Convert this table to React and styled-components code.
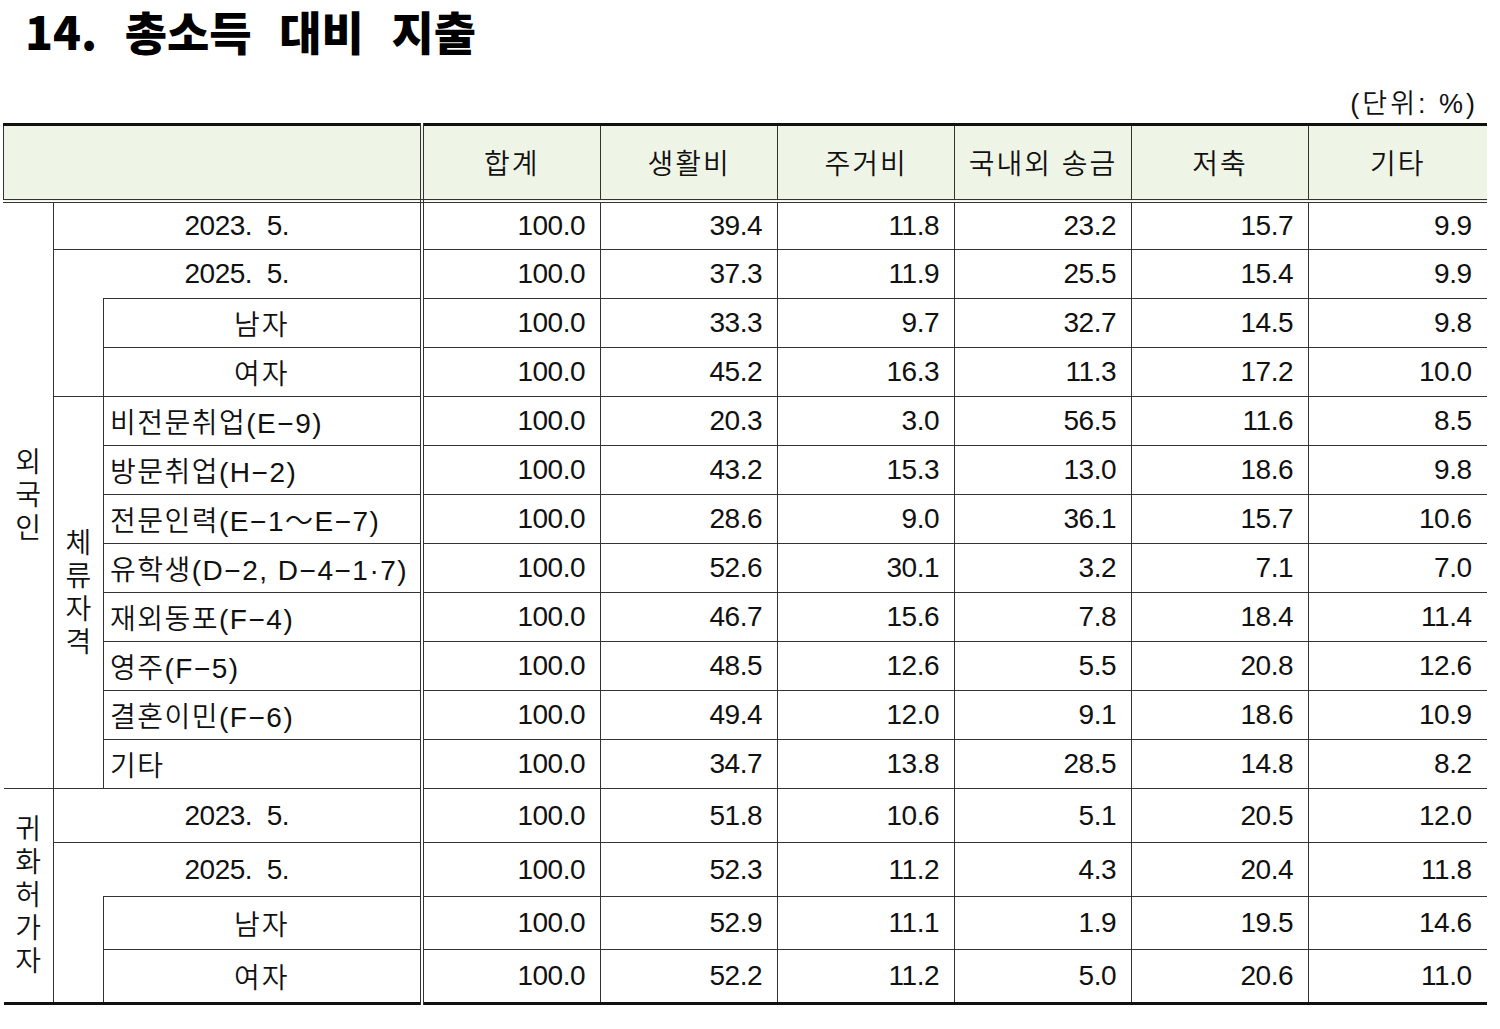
import React from 'react';
import styled, { createGlobalStyle } from 'styled-components';

const GlobalStyle = createGlobalStyle`
  body {
    margin: 0;
    background: #fff;
    color: #111;
    font-family: "Liberation Sans", "Noto Sans CJK KR", sans-serif;
  }
`;

const Page = styled.div`
  width: 1483px;
  margin-left: 3px;
`;

const Title = styled.h1`
  margin: 0;
  height: 60px;
  padding-left: 22px;
  font-family: "Noto Sans CJK KR", sans-serif;
  font-weight: 900;
  font-size: 46px;
  line-height: 60px;
  letter-spacing: 0;
  word-spacing: 17px;
  color: #000;
`;

const Unit = styled.div`
  box-sizing: border-box;
  height: 63px;
  display: flex;
  justify-content: flex-end;
  align-items: flex-end;
  padding: 0 8px 3px 0;
  font-size: 27px;
  font-weight: 350;
  line-height: 32px;
  letter-spacing: 3px;
`;

const Table = styled.table`
  width: 1483px;
  table-layout: fixed;
  border-collapse: collapse;
  border-top: 3px solid #111;
  border-bottom: 3px solid #111;
  font-size: 28px;
  font-weight: 350;
`;

const Row = styled.tr`
  height: ${p => p.$h}px;
`;

const HeadCell = styled.th`
  padding: 0;
  background: #eef4e6;
  font-weight: 350;
  text-align: center;
  letter-spacing: 2px;
  border-bottom: 4px double #333;
  border-left: 1px solid #333;
  border-right: ${p => (p.$double ? '4px double #333' : 'none')};
`;

const GroupCell = styled.td`
  padding: 0;
  vertical-align: middle;
  border-right: 1px solid #333;
  border-bottom: ${p => (p.$closed ? '1px solid #333' : 'none')};
`;

const Stack = styled.span`
  display: flex;
  flex-direction: column;
  align-items: center;
  line-height: 33px;
`;

const BlankCell = styled.td`
  padding: 0;
  border-top: hidden;
  border-right: 1px solid #333;
  border-bottom: 1px solid #333;
`;

const LabelCell = styled.td`
  padding: 0 0 0 ${p => (p.$left ? '6px' : '0')};
  text-align: ${p => (p.$left ? 'left' : 'center')};
  letter-spacing: ${p => (p.$left ? '1.5px' : p.$tight ? '-0.5px' : '2px')};
  white-space: pre;
  border-right: 4px double #333;
  border-bottom: 1px solid #333;
`;

const NumCell = styled.td`
  padding: 0 15px 0 0;
  text-align: right;
  letter-spacing: -0.5px;
  border-left: 1px solid #333;
  border-bottom: 1px solid #333;
`;

const heads = ['합계', '생활비', '주거비', '국내외 송금', '저축', '기타'];

const foreign = {
  heights: [49, 49, 49, 49, 49, 49, 49, 49, 49, 49, 49, 49],
  years: [
    ['2023.  5.', ['100.0', '39.4', '11.8', '23.2', '15.7', '9.9']],
    ['2025.  5.', ['100.0', '37.3', '11.9', '25.5', '15.4', '9.9']],
  ],
  sex: [
    ['남자', ['100.0', '33.3', '9.7', '32.7', '14.5', '9.8']],
    ['여자', ['100.0', '45.2', '16.3', '11.3', '17.2', '10.0']],
  ],
  status: [
    ['비전문취업(E−9)', ['100.0', '20.3', '3.0', '56.5', '11.6', '8.5']],
    ['방문취업(H−2)', ['100.0', '43.2', '15.3', '13.0', '18.6', '9.8']],
    ['전문인력(E−1～E−7)', ['100.0', '28.6', '9.0', '36.1', '15.7', '10.6']],
    ['유학생(D−2, D−4−1·7)', ['100.0', '52.6', '30.1', '3.2', '7.1', '7.0']],
    ['재외동포(F−4)', ['100.0', '46.7', '15.6', '7.8', '18.4', '11.4']],
    ['영주(F−5)', ['100.0', '48.5', '12.6', '5.5', '20.8', '12.6']],
    ['결혼이민(F−6)', ['100.0', '49.4', '12.0', '9.1', '18.6', '10.9']],
    ['기타', ['100.0', '34.7', '13.8', '28.5', '14.8', '8.2']],
  ],
};

const naturalized = {
  heights: [54, 54, 53, 54],
  years: [
    ['2023.  5.', ['100.0', '51.8', '10.6', '5.1', '20.5', '12.0']],
    ['2025.  5.', ['100.0', '52.3', '11.2', '4.3', '20.4', '11.8']],
  ],
  sex: [
    ['남자', ['100.0', '52.9', '11.1', '1.9', '19.5', '14.6']],
    ['여자', ['100.0', '52.2', '11.2', '5.0', '20.6', '11.0']],
  ],
  status: [],
};

const Nums = ({ values }) => values.map((v, i) => <NumCell key={i}>{v}</NumCell>);

const VLabel = ({ text }) => (
  <Stack>
    {[...text].map((c, i) => (
      <span key={i}>{c}</span>
    ))}
  </Stack>
);

const Block = ({ label, data, closed }) => {
  const total = data.years.length + data.sex.length + data.status.length;
  const ny = data.years.length;
  const ns = data.sex.length;
  return (
    <>
      {data.years.map(([name, vals], i) => (
        <Row key={name} $h={data.heights[i]}>
          {i === 0 && (
            <GroupCell rowSpan={total} $closed={closed}>
              <VLabel text={label} />
            </GroupCell>
          )}
          <LabelCell colSpan={2} $tight>{name}</LabelCell>
          <Nums values={vals} />
        </Row>
      ))}
      {data.sex.map(([name, vals], i) => (
        <Row key={name} $h={data.heights[ny + i]}>
          {i === 0 && <BlankCell rowSpan={ns} />}
          <LabelCell>{name}</LabelCell>
          <Nums values={vals} />
        </Row>
      ))}
      {data.status.map(([name, vals], i) => (
        <Row key={name + i} $h={data.heights[ny + ns + i]}>
          {i === 0 && (
            <GroupCell rowSpan={data.status.length} $closed>
              <VLabel text="체류자격" />
            </GroupCell>
          )}
          <LabelCell $left>{name}</LabelCell>
          <Nums values={vals} />
        </Row>
      ))}
    </>
  );
};

export default function App() {
  return (
    <Page>
      <GlobalStyle />
      <Title>14. 총소득 대비 지출</Title>
      <Unit>(단위: %)</Unit>
      <Table>
        <colgroup>
          <col style={{ width: 50 }} />
          <col style={{ width: 50 }} />
          <col style={{ width: 318 }} />
          <col style={{ width: 179 }} />
          <col style={{ width: 177 }} />
          <col style={{ width: 177 }} />
          <col style={{ width: 177 }} />
          <col style={{ width: 177 }} />
          <col style={{ width: 178 }} />
        </colgroup>
        <thead>
          <Row $h={76}>
            <HeadCell colSpan={3} $double />
            {heads.map(t => (
              <HeadCell key={t}>{t}</HeadCell>
            ))}
          </Row>
        </thead>
        <tbody>
          <Block label="외국인" data={foreign} closed />
          <Block label="귀화허가자" data={naturalized} />
        </tbody>
      </Table>
    </Page>
  );
}
